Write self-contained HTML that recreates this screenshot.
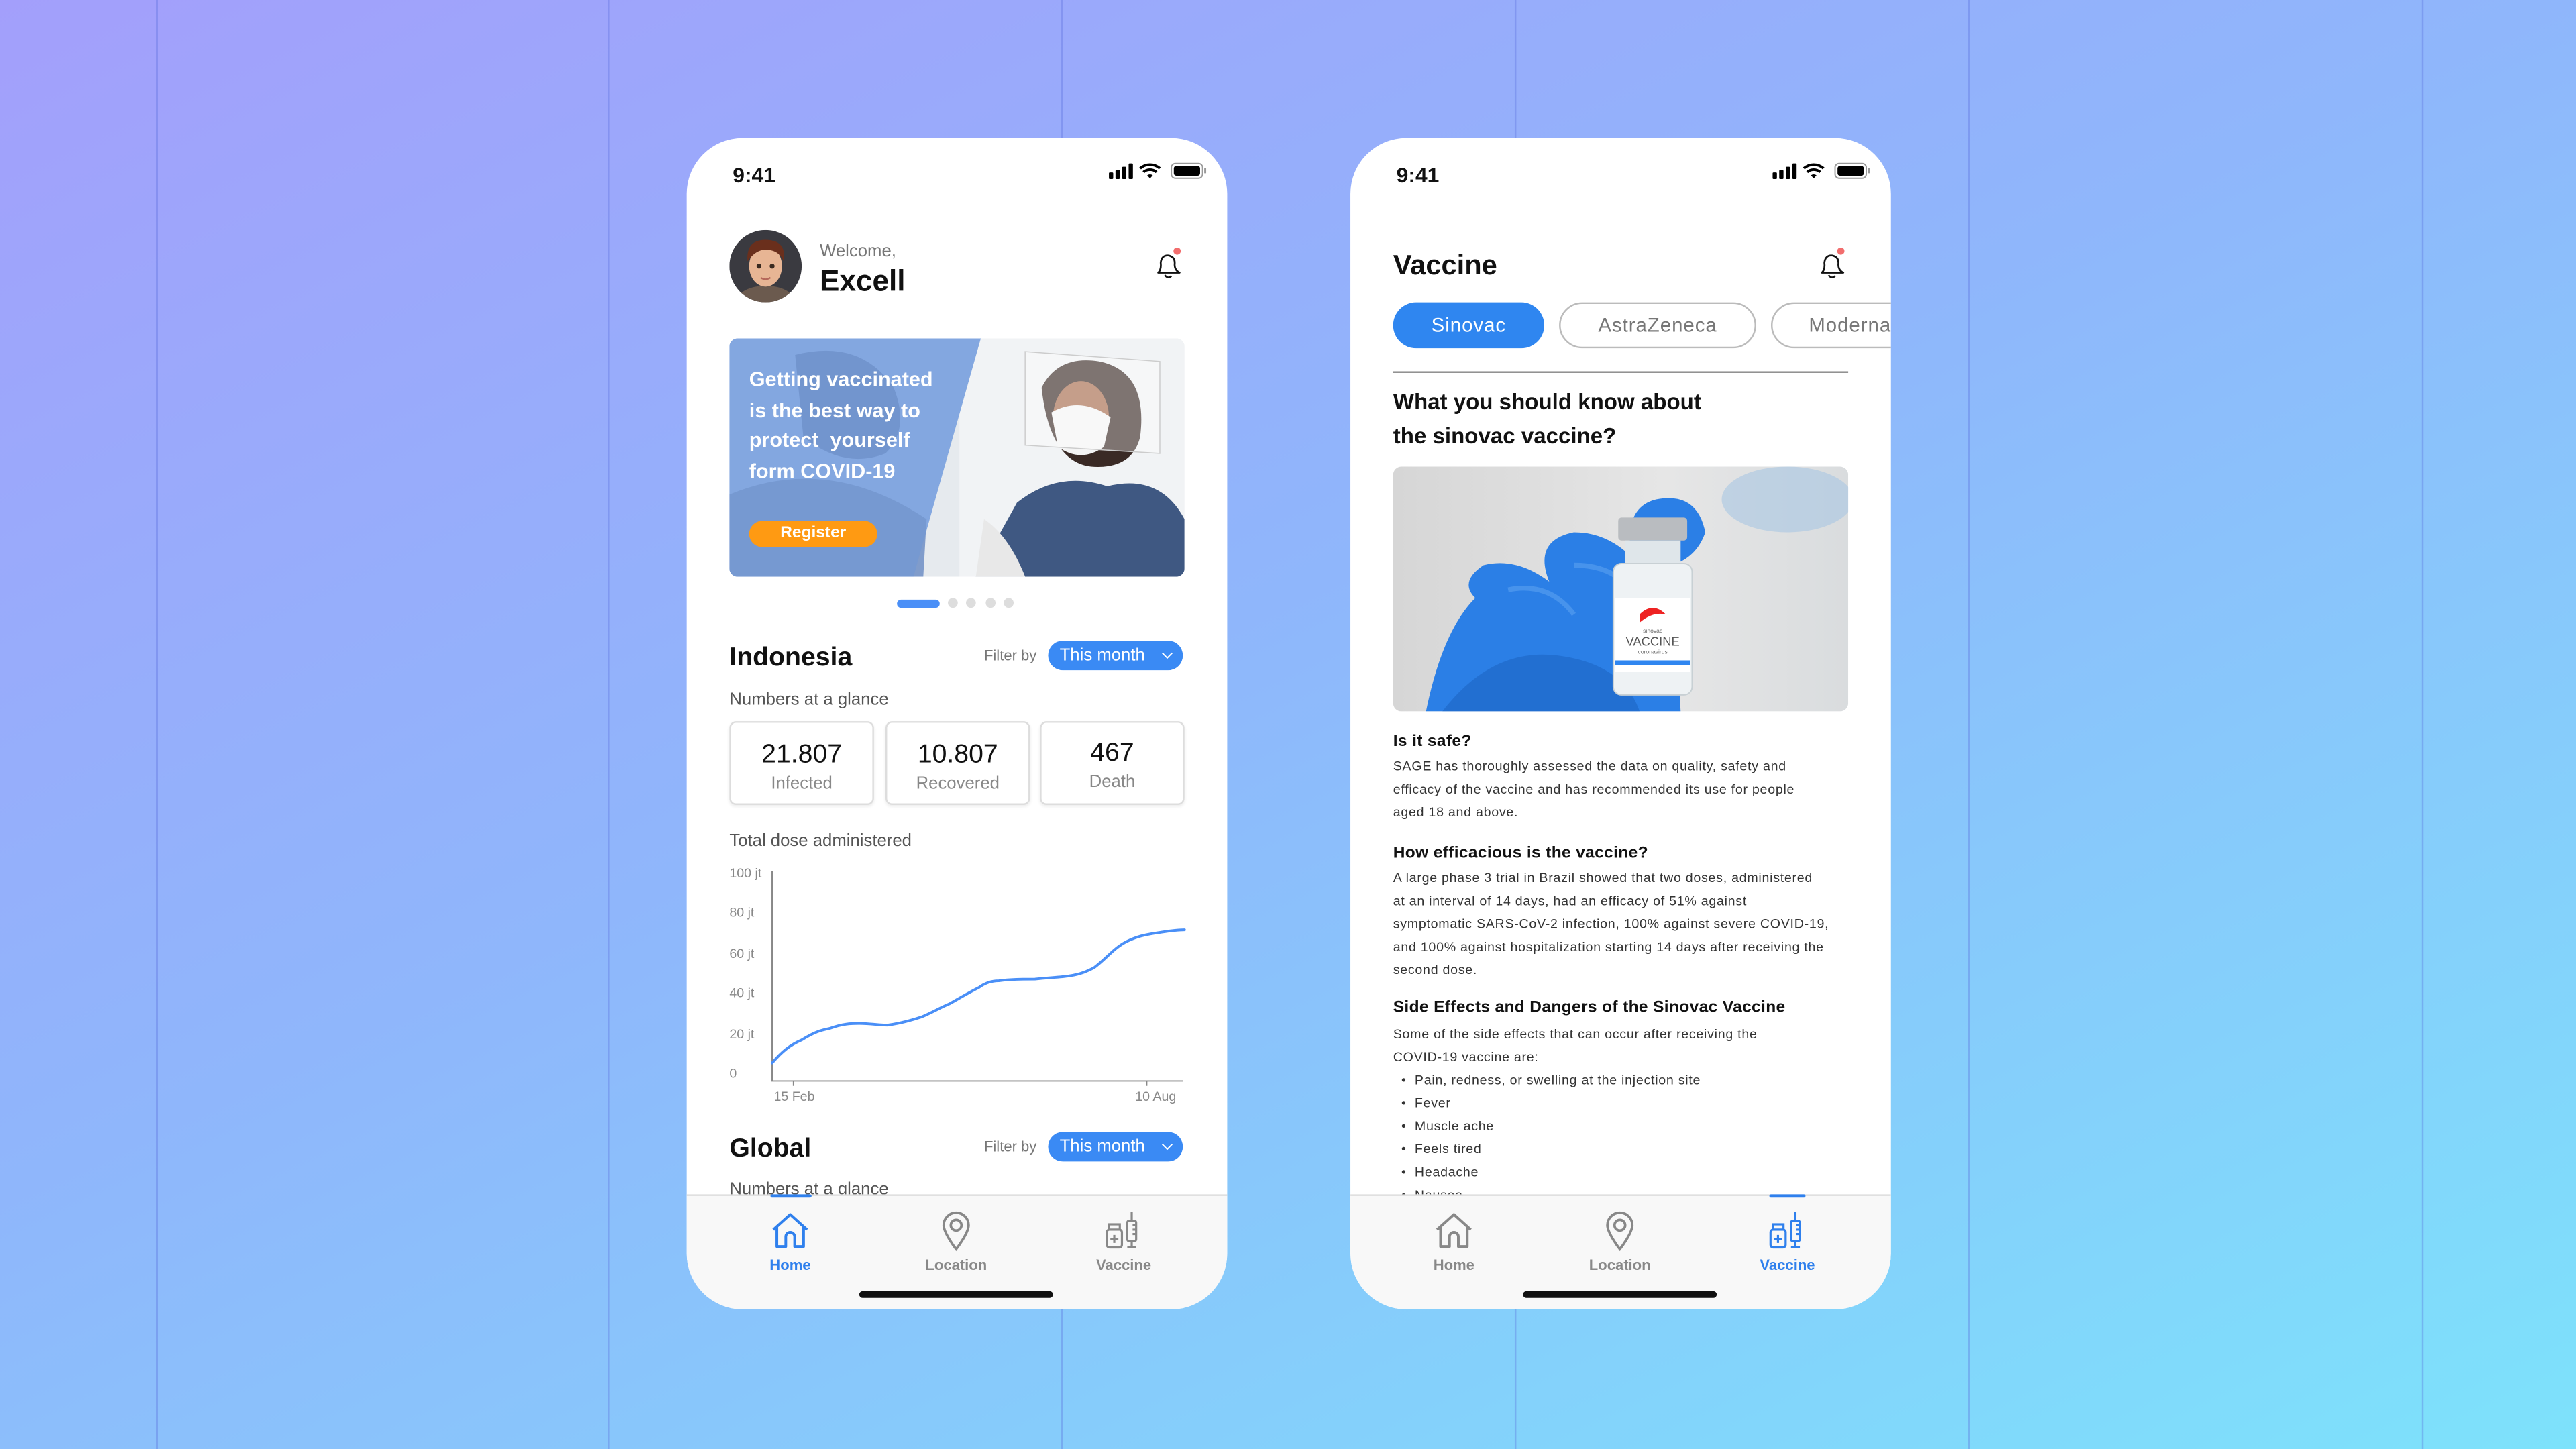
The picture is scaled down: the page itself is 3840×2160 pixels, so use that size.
<!DOCTYPE html>
<html><head><meta charset="utf-8"><style>
*{margin:0;padding:0;box-sizing:border-box}
html,body{width:3840px;height:2160px;overflow:hidden}
body{font-family:"Liberation Sans",sans-serif;background:linear-gradient(155deg,#a39ffb 0%,#8fb6fb 45%,#7de2fb 100%)}
#s{position:absolute;left:0;top:0;width:1568px;height:882px;transform:scale(2.44898);transform-origin:0 0}
.vl{position:absolute;top:0;width:0.6px;height:882px;background:rgba(90,110,220,0.35)}
.ph{position:absolute;top:84px;width:329px;height:713px;background:#fff;border-radius:34px;overflow:hidden}
.a{position:absolute;white-space:nowrap}
.t{line-height:1}
.time{left:28px;top:15px;font-size:13px;font-weight:700;color:#111}
.nav{position:absolute;left:0;top:643px;width:329px;height:70px;background:#f8f8f8;border-top:1px solid #ddd}
.ni{position:absolute;top:8px;width:60px;text-align:center;font-size:9px;font-weight:700;color:#888}
.ni svg{display:block;margin:0 auto 3px}
.ind{position:absolute;top:-1px;height:2px;background:#2f80ed;border-radius:1px}
.hb{position:absolute;left:105px;top:702px;width:118px;height:3.5px;background:#111;border-radius:2px}
.pill{position:absolute;height:18px;width:82px;left:220px;background:#3a8af4;border-radius:9px;color:#fff;font-size:10.5px;line-height:18px;padding-left:7px}
.card{position:absolute;top:355px;width:88px;height:51px;border:1px solid #ddd;border-radius:4px;box-shadow:0 1px 2px rgba(0,0,0,.08);text-align:center}
.card b{display:block;font-size:16px;font-weight:400;color:#111;margin-top:12px;line-height:16px}
.card span{display:block;font-size:10.5px;color:#888;margin-top:3px}
.yl{position:absolute;left:26px;font-size:8px;color:#888;line-height:8px}
.body{position:absolute;left:26px;font-size:8px;color:#333;line-height:14px;white-space:nowrap;letter-spacing:.3px}
.h{position:absolute;left:26px;font-size:10px;font-weight:700;color:#111;white-space:nowrap;letter-spacing:.15px}
</style></head><body><div id="s">
<div class="vl" style="left:95px"></div><div class="vl" style="left:370px"></div><div class="vl" style="left:646px"></div><div class="vl" style="left:922px"></div><div class="vl" style="left:1198px"></div><div class="vl" style="left:1474px"></div>

<!-- PHONE 1 -->
<div class="ph" style="left:418px">
<div class="a time">9:41</div>
<svg class="a" style="left:256px;top:14px" width="62" height="12" viewBox="0 0 62 12"><rect x="1" y="7" width="2.6" height="4" rx=".6"/><rect x="5" y="5.5" width="2.6" height="5.5" rx=".6"/><rect x="9" y="3.5" width="2.6" height="7.5" rx=".6"/><rect x="13" y="1.5" width="2.6" height="9.5" rx=".6"/><path d="M20 4.5a9 9 0 0 1 12 0M22 6.8a6 6 0 0 1 8 0" stroke="#000" stroke-width="1.6" fill="none"/><path d="M24.3 8.8a2.6 2.6 0 0 1 3.4 0L26 10.6z"/><rect x="39" y="1.5" width="19" height="9" rx="2.5" fill="none" stroke="#999" stroke-width=".8"/><rect x="40.5" y="3" width="16" height="6" rx="1.5"/><rect x="59" y="4.5" width="1.2" height="3" fill="#999"/></svg>
<svg class="a" style="left:26px;top:56px" width="44" height="44" viewBox="0 0 44 44"><defs><clipPath id="c1"><circle cx="22" cy="22" r="22"/></clipPath></defs><g clip-path="url(#c1)"><rect width="44" height="44" fill="#3a3a40"/><path d="M2 44 Q8 34 22 34 Q36 34 42 44Z" fill="#6b5a4e"/><ellipse cx="22" cy="22" rx="10" ry="12.5" fill="#e7b594"/><path d="M11 19 Q10 6 22 6 Q35 6 33 19 Q30 12 22 12 Q16 12 11 19Z" fill="#6a2f1c"/><circle cx="18" cy="22" r="1.5" fill="#3a2a20"/><circle cx="26" cy="22" r="1.5" fill="#3a2a20"/><path d="M19 29 Q22 31 25 29" stroke="#b5675a" stroke-width="1" fill="none"/></g></svg>
<div class="a t" style="left:81px;top:64px;font-size:10.5px;color:#777">Welcome,</div>
<div class="a t" style="left:81px;top:78px;font-size:18px;font-weight:700;color:#111">Excell</div>
<svg class="a" style="left:283px;top:67px" width="20" height="20" viewBox="0 0 20 20"><path d="M4 15 Q6 13 5.5 9 Q6 4 10.5 4.5 Q14.5 5.5 14 10 Q14 13.5 17 15Z M8 16.5 Q10 19 12 17" stroke="#111" stroke-width="1.1" fill="none" stroke-linejoin="round"/><circle cx="15.5" cy="1.8" r="2.2" fill="#f26d6d"/></svg>
<svg class="a" style="left:26px;top:122px;border-radius:5px" width="277" height="145" viewBox="0 0 277 145"><rect width="277" height="145" fill="#e6eaee"/><rect x="140" width="137" height="145" fill="#f1f3f5"/><path d="M190 30 Q200 10 225 14 Q255 20 250 60 Q245 80 220 78 Q195 75 190 30Z" fill="#3a2a25"/><ellipse cx="214" cy="48" rx="17" ry="22" fill="#a66a4c"/><path d="M196 45 Q214 35 232 48 L228 66 Q214 76 200 66Z" fill="#f4f4f4"/><path d="M180 8 L262 14 L262 70 L180 65Z" fill="rgba(255,255,255,.35)" stroke="#ccc" stroke-width=".6"/><path d="M150 145 L175 100 Q200 80 230 90 Q262 82 277 110 L277 145Z" fill="#3f5882"/><path d="M155 110 Q170 120 180 145 L150 145Z" fill="#e8e8e8"/><path d="M0 0 L153 0 L112 145 L0 145Z" fill="#7ea3dd"/><path d="M40 10 Q80 0 100 30 Q110 55 95 70 Q70 80 45 60Z" fill="#5a7cb6" opacity=".7"/><path d="M0 95 Q60 70 120 110 L118 145 L0 145Z" fill="#6788c2" opacity=".8"/><path d="M0 0 L153 0 L112 145 L0 145Z" fill="rgba(140,175,230,.35)"/></svg>
<div class="a" style="left:38px;top:138px;font-size:12.5px;font-weight:700;color:#fff;line-height:18.5px">Getting vaccinated<br>is the best way to<br>protect &nbsp;yourself<br>form COVID-19</div>
<div class="a" style="left:38px;top:233px;width:78px;height:16px;border-radius:8px;background:#ff9a12;color:#fff;font-size:10px;font-weight:700;text-align:center;line-height:16px">Register</div>
<div class="a" style="left:128px;top:280.5px;width:26px;height:5px;border-radius:3px;background:#4a8ff7"></div>
<div class="a" style="left:159px;top:280px;width:6px;height:6px;border-radius:3px;background:#ddd"></div>
<div class="a" style="left:170px;top:280px;width:6px;height:6px;border-radius:3px;background:#ddd"></div>
<div class="a" style="left:182px;top:280px;width:6px;height:6px;border-radius:3px;background:#ddd"></div>
<div class="a" style="left:193px;top:280px;width:6px;height:6px;border-radius:3px;background:#ddd"></div>
<div class="a t" style="left:26px;top:309px;font-size:16px;font-weight:700;color:#111">Indonesia</div>
<div class="a t" style="left:181px;top:311px;font-size:9px;color:#777">Filter by</div>
<div class="pill" style="top:306px">This month<svg style="position:absolute;right:6px;top:7px" width="7" height="4" viewBox="0 0 7 4"><path d="M.5.5L3.5 3.5L6.5.5" stroke="#fff" stroke-width=".8" fill="none"/></svg></div>
<div class="a t" style="left:26px;top:337px;font-size:10.5px;color:#555">Numbers at a glance</div>
<div class="card" style="left:26px"><b>21.807</b><span>Infected</span></div>
<div class="card" style="left:121px"><b>10.807</b><span>Recovered</span></div>
<div class="card" style="left:215px"><b style="margin-top:11px">467</b><span>Death</span></div>
<div class="a t" style="left:26px;top:423px;font-size:10.5px;color:#555">Total dose administered</div>
<div class="yl" style="top:444px">100 jt</div><div class="yl" style="top:468px">80 jt</div><div class="yl" style="top:493px">60 jt</div><div class="yl" style="top:517px">40 jt</div><div class="yl" style="top:542px">20 jt</div><div class="yl" style="top:566px">0</div>
<svg class="a" style="left:0;top:0" width="329" height="600" viewBox="0 0 329 600"><path d="M52 446V574H302M65 574V577M280 574V577" stroke="#888" stroke-width=".8" fill="none"/><path d="M52 563 C58 556 63 552 70 549 C78 544 82 543 87 542 C95 539 100 539 105 539 C112 539 117 540 122 540 C130 539 137 537 143 535 C150 532 155 529 160 527 C167 523 172 520 178 517 C182 514 186 513 190 513 C197 512 204 512 212 512 C220 511 227 511 233 510 C240 509 244 507 248 505 C256 499 260 493 268 489 C274 486 279 485 285 484 C292 483 297 482 303 482" stroke="#4a8ff7" stroke-width="1.6" fill="none" stroke-linecap="round"/></svg>
<div class="a t" style="left:53px;top:580px;font-size:8px;color:#888">15 Feb</div>
<div class="a t" style="left:273px;top:580px;font-size:8px;color:#888">10 Aug</div>
<div class="a t" style="left:26px;top:608px;font-size:16px;font-weight:700;color:#111">Global</div>
<div class="a t" style="left:181px;top:610px;font-size:9px;color:#777">Filter by</div>
<div class="pill" style="top:605px">This month<svg style="position:absolute;right:6px;top:7px" width="7" height="4" viewBox="0 0 7 4"><path d="M.5.5L3.5 3.5L6.5.5" stroke="#fff" stroke-width=".8" fill="none"/></svg></div>
<div class="a t" style="left:26px;top:635px;font-size:10.5px;color:#555">Numbers at a glance</div>
<div class="nav">
<div class="ind" style="left:51px;width:25px"></div>
<div class="ni" style="left:33px;color:#2f80ed"><svg width="26" height="26" viewBox="0 0 24 24" fill="none" stroke="#2f80ed" stroke-width="1.5" stroke-linejoin="round"><path d="M2.5 11.5L12 3L21.5 11.5M4.5 10V21H9.5V15.5a2.5 2.5 0 0 1 5 0V21H19.5V10"/></svg>Home</div>
<div class="ni" style="left:134px"><svg width="26" height="26" viewBox="0 0 24 24" fill="none" stroke="#888" stroke-width="1.4"><path d="M12 22.5C12 22.5 5 13.5 5 9A7 7 0 0 1 19 9C19 13.5 12 22.5 12 22.5Z"/><circle cx="12" cy="9" r="3"/></svg>Location</div>
<div class="ni" style="left:236px"><svg width="26" height="26" viewBox="0 0 24 24" fill="none" stroke="#888" stroke-width="1.2"><rect x="2.5" y="11.5" width="8.5" height="10" rx="1.5"/><rect x="3.8" y="8.5" width="6" height="3"/><path d="M6.7 14.5v4.5M4.5 16.7h4.5"/><rect x="14" y="6.5" width="5" height="11.5" rx="1"/><path d="M16.5 1.5V6.5M16.5 18V21M14 21.3H19M17 9H19M17 11.5H19M17 14H19"/></svg>Vaccine</div>
</div>
<div class="hb"></div>
</div>

<!-- PHONE 2 -->
<div class="ph" style="left:822px">
<div class="a time">9:41</div>
<svg class="a" style="left:256px;top:14px" width="62" height="12" viewBox="0 0 62 12"><rect x="1" y="7" width="2.6" height="4" rx=".6"/><rect x="5" y="5.5" width="2.6" height="5.5" rx=".6"/><rect x="9" y="3.5" width="2.6" height="7.5" rx=".6"/><rect x="13" y="1.5" width="2.6" height="9.5" rx=".6"/><path d="M20 4.5a9 9 0 0 1 12 0M22 6.8a6 6 0 0 1 8 0" stroke="#000" stroke-width="1.6" fill="none"/><path d="M24.3 8.8a2.6 2.6 0 0 1 3.4 0L26 10.6z"/><rect x="39" y="1.5" width="19" height="9" rx="2.5" fill="none" stroke="#999" stroke-width=".8"/><rect x="40.5" y="3" width="16" height="6" rx="1.5"/><rect x="59" y="4.5" width="1.2" height="3" fill="#999"/></svg>
<div class="a t" style="left:26px;top:69px;font-size:17px;font-weight:700;color:#111">Vaccine</div>
<svg class="a" style="left:283px;top:67px" width="20" height="20" viewBox="0 0 20 20"><path d="M4 15 Q6 13 5.5 9 Q6 4 10.5 4.5 Q14.5 5.5 14 10 Q14 13.5 17 15Z M8 16.5 Q10 19 12 17" stroke="#111" stroke-width="1.1" fill="none" stroke-linejoin="round"/><circle cx="15.5" cy="1.8" r="2.2" fill="#f26d6d"/></svg>
<div class="a" style="left:26px;top:100px;width:92px;height:28px;border-radius:14px;background:#2f86f0;color:#fff;font-size:12px;line-height:28px;text-align:center;letter-spacing:.4px">Sinovac</div>
<div class="a" style="left:127px;top:100px;width:120px;height:28px;border-radius:14px;border:1px solid #bbb;color:#777;font-size:12px;line-height:26px;text-align:center;letter-spacing:.4px">AstraZeneca</div>
<div class="a" style="left:256px;top:100px;width:110px;height:28px;border-radius:14px;border:1px solid #bbb;color:#777;font-size:12px;line-height:26px;padding-left:22px;letter-spacing:.4px">Moderna</div>
<div class="a" style="left:26px;top:142px;width:277px;height:1px;background:#888"></div>
<div class="a" style="left:26px;top:150px;font-size:13.5px;font-weight:700;color:#111;line-height:21px">What you should know about<br>the sinovac vaccine?</div>
<svg class="a" style="left:26px;top:200px;border-radius:5px" width="277" height="149" viewBox="0 0 277 149"><defs><linearGradient id="g1" x1="0" x2="1"><stop offset="0" stop-color="#d6d6d6"/><stop offset=".6" stop-color="#e6e6e6"/><stop offset="1" stop-color="#d9dcde"/></linearGradient></defs><rect width="277" height="149" fill="url(#g1)"/><ellipse cx="240" cy="20" rx="40" ry="20" fill="#a9c7e3" opacity=".6"/><path d="M20 149 Q30 100 50 80 Q40 70 55 60 Q75 55 95 70 Q85 45 110 40 Q130 40 145 55 Q140 25 160 20 Q185 15 190 40 Q185 55 170 60 L175 149Z" fill="#2b7fe6"/><path d="M30 149 Q60 110 100 115 Q140 120 150 149Z" fill="#1f68c8" opacity=".7"/><path d="M70 75 Q95 70 110 90 M110 60 Q140 60 150 85" stroke="#5aa0f0" stroke-width="3" fill="none" opacity=".6"/><rect x="137" y="31" width="42" height="14" rx="2" fill="#b9bcc0"/><rect x="141" y="45" width="34" height="14" fill="#dfe6ea"/><rect x="134" y="59" width="48" height="80" rx="5" fill="#eef2f4" stroke="#c8d0d4" stroke-width=".8"/><rect x="135" y="80" width="46" height="45" fill="#fff"/><rect x="135" y="118" width="46" height="3" fill="#2f86f0"/><path d="M150 90 Q158 82 166 90 Q158 88 150 95Z" fill="#e22"/><text x="158" y="101" font-size="3.5" text-anchor="middle" fill="#666" font-family="Liberation Sans">sinovac</text><text x="158" y="109" font-size="7.5" text-anchor="middle" fill="#555" font-family="Liberation Sans">VACCINE</text><text x="158" y="114" font-size="3.5" text-anchor="middle" fill="#666" font-family="Liberation Sans">coronavirus</text></svg>
<div class="h t" style="top:363px">Is it safe?</div>
<div class="body" style="top:376px">SAGE has thoroughly assessed the data on quality, safety and<br>efficacy of the vaccine and has recommended its use for people<br>aged 18 and above.</div>
<div class="h t" style="top:431px">How efficacious is the vaccine?</div>
<div class="body" style="top:444px">A large phase 3 trial in Brazil showed that two doses, administered<br>at an interval of 14 days, had an efficacy of 51% against<br>symptomatic SARS-CoV-2 infection, 100% against severe COVID-19,<br>and 100% against hospitalization starting 14 days after receiving the<br>second dose.</div>
<div class="h t" style="top:525px">Side Effects and Dangers of the Sinovac Vaccine</div>
<div class="body" style="top:539px">Some of the side effects that can occur after receiving the<br>COVID-19 vaccine are:</div>
<div class="body" style="top:567px;left:31px">•&nbsp; Pain, redness, or swelling at the injection site<br>•&nbsp; Fever<br>•&nbsp; Muscle ache<br>•&nbsp; Feels tired<br>•&nbsp; Headache<br>•&nbsp; Nausea</div>
<div class="nav">
<div class="ind" style="left:255px;width:22px"></div>
<div class="ni" style="left:33px"><svg width="26" height="26" viewBox="0 0 24 24" fill="none" stroke="#888" stroke-width="1.5" stroke-linejoin="round"><path d="M2.5 11.5L12 3L21.5 11.5M4.5 10V21H9.5V15.5a2.5 2.5 0 0 1 5 0V21H19.5V10"/></svg>Home</div>
<div class="ni" style="left:134px"><svg width="26" height="26" viewBox="0 0 24 24" fill="none" stroke="#888" stroke-width="1.4"><path d="M12 22.5C12 22.5 5 13.5 5 9A7 7 0 0 1 19 9C19 13.5 12 22.5 12 22.5Z"/><circle cx="12" cy="9" r="3"/></svg>Location</div>
<div class="ni" style="left:236px;color:#2f80ed"><svg width="26" height="26" viewBox="0 0 24 24" fill="none" stroke="#2f80ed" stroke-width="1.2"><rect x="2.5" y="11.5" width="8.5" height="10" rx="1.5"/><rect x="3.8" y="8.5" width="6" height="3"/><path d="M6.7 14.5v4.5M4.5 16.7h4.5"/><rect x="14" y="6.5" width="5" height="11.5" rx="1"/><path d="M16.5 1.5V6.5M16.5 18V21M14 21.3H19M17 9H19M17 11.5H19M17 14H19"/></svg>Vaccine</div>
</div>
<div class="hb"></div>
</div>
</div></body></html>
